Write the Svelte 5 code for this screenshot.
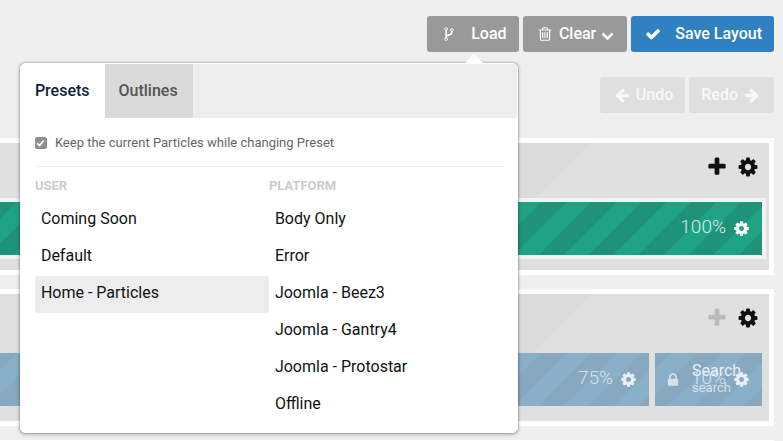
<script>
  let tab = $state('Presets');
  let keep = $state(true);
  let selected = $state('Home - Particles');

  const groups = [
    { title: 'User', items: ['Coming Soon', 'Default', 'Home - Particles'] },
    {
      title: 'Platform',
      items: ['Body Only', 'Error', 'Joomla - Beez3', 'Joomla - Gantry4', 'Joomla - Protostar', 'Offline']
    }
  ];

  const icons = {
    check: 'M1671 566q0 40-28 68l-724 724-136 136q-28 28-68 28t-68-28l-136-136-362-362q-28-28-28-68t28-68l136-136q28-28 68-28t68 28l294 295 656-657q28-28 68-28t68 28l136 136q28 28 28 68z',
    plus: 'M1600 736v192q0 40-28 68t-68 28h-416v416q0 40-28 68t-68 28h-192q-40 0-68-28t-28-68v-416h-416q-40 0-68-28t-28-68v-192q0-40 28-68t68-28h416v-416q0-40 28-68t68-28h192q40 0 68 28t28 68v416h416q40 0 68 28t28 68z',
    cog: 'M1152 896q0-106-75-181t-181-75-181 75-75 181 75 181 181 75 181-75 75-181zm512-109v222q0 12-8 23t-20 13l-185 28q-19 54-39 91 35 50 107 138 10 12 10 25t-9 23q-27 37-99 108t-94 71q-12 0-26-9l-138-108q-44 23-91 38-16 136-29 186-7 28-36 28h-222q-14 0-24.5-8.5t-11.5-21.5l-28-184q-49-16-90-37l-141 107q-10 9-25 9-14 0-25-11-126-114-165-168-7-10-7-23 0-12 8-23 15-21 51-66.5t54-70.5q-27-50-41-99l-183-27q-13-2-21-12.5t-8-23.5v-222q0-12 8-23t19-13l186-28q14-46 39-92-40-57-107-138-10-12-10-24 0-10 9-23 26-36 98.5-107.5t94.5-71.5q13 0 26 10l138 107q44-23 91-38 16-136 29-186 7-28 36-28h222q14 0 24.5 8.5t11.5 21.5l28 184q49 16 90 37l142-107q9-9 24-9 13 0 25 10 129 119 165 170 7 8 7 22 0 12-8 23-15 21-51 66.5t-54 70.5q26 50 41 98l183 28q13 2 21 12.5t8 23.5z',
    arrow: 'M1664 896v128q0 53-32.5 90.5t-84.5 37.5h-704l293 294q38 36 38 90t-38 90l-75 76q-37 37-90 37-52 0-91-37l-651-652q-37-37-37-90 0-52 37-91l651-650q38-38 91-38 52 0 90 38l75 74q38 38 38 91t-38 91l-293 293h704q52 0 84.5 37.5t32.5 90.5z',
    lock: 'M640 768h512v-192q0-106-75-181t-181-75-181 75-75 181v192zm832 96v576q0 40-28 68t-68 28h-960q-40 0-68-28t-28-68v-576q0-40 28-68t68-28h32v-192q0-184 132-316t316-132 316 132 132 316v192h32q40 0 68 28t28 68z',
    trash: 'M704 736v576q0 14-9 23t-23 9h-64q-14 0-23-9t-9-23v-576q0-14 9-23t23-9h64q14 0 23 9t9 23zm256 0v576q0 14-9 23t-23 9h-64q-14 0-23-9t-9-23v-576q0-14 9-23t23-9h64q14 0 23 9t9 23zm256 0v576q0 14-9 23t-23 9h-64q-14 0-23-9t-9-23v-576q0-14 9-23t23-9h64q14 0 23 9t9 23zm128 724v-948h-896v948q0 22 7 40.5t14.5 27 10.5 8.5h832q3 0 10.5-8.5t14.5-27 7-40.5zm-672-1076h448l-48-117q-7-9-17-11h-317q-10 2-17 11zm928 32v64q0 14-9 23t-23 9h-96v948q0 83-47 143.5t-113 60.5h-832q-66 0-113-58.5t-47-141.5v-952h-96q-14 0-23-9t-9-23v-64q0-14 9-23t23-9h309l70-167q15-37 54-63t79-26h320q40 0 79 26t54 63l70 167h309q14 0 23 9t9 23z',
    fork: 'M672 1472q0-40-28-68t-68-28-68 28-28 68 28 68 68 28 68-28 28-68zm0-1152q0-40-28-68t-68-28-68 28-28 68 28 68 68 28 68-28 28-68zm640 128q0-40-28-68t-68-28-68 28-28 68 28 68 68 28 68-28 28-68zm96 0q0 52-26 96.5t-70 69.5q-2 287-226 414-67 38-203 81-128 40-169.5 71t-41.5 100v26q44 25 70 69.5t26 96.5q0 80-56 136t-136 56-136-56-56-136q0-52 26-96.5t70-69.5v-820q-44-25-70-69.5t-26-96.5q0-80 56-136t136-56 136 56 56 136q0 52-26 96.5t-70 69.5v497q54-26 154-57 55-17 87.5-29.5t70.5-31 59-39.5 40.5-51 28-69.5 8.5-91.5q-44-25-70-69.5t-26-96.5q0-80 56-136t136-56 136 56 56 136z'
  };
</script>

{#snippet icon(name, size)}
  <svg class="icon {size}" viewBox="0 0 1792 1792" aria-hidden="true"><path d={icons[name]} /></svg>
{/snippet}

{#snippet sectionTools(locked)}
  <div class="section-tools">
    <button class="tool" aria-label="Add row" disabled={locked}>{@render icon('plus', 'large')}</button>
    <button class="tool" aria-label="Section settings">{@render icon('cog', 'large')}</button>
  </div>
{/snippet}

<main>
  <div class="toolbar">
    <div class="dropdown">
      <button class="btn">
        <span class="slot">{@render icon('fork', 'regular')}</span>
        Load
      </button>
      <div class="popover">
        <div class="tabs" role="tablist">
          {#each ['Presets', 'Outlines'] as name}
            <button class="tab" class:active={tab === name} role="tab" aria-selected={tab === name} onclick={() => (tab = name)}>{name}</button>
          {/each}
        </div>
        <div class="panel">
          <label class="keep">
            <input type="checkbox" bind:checked={keep} />
            Keep the current Particles while changing Preset
          </label>
          <div class="groups">
            {#each groups as group}
              <div class="group">
                <h2>{group.title}</h2>
                <ul>
                  {#each group.items as item}
                    <li>
                      <button class="item" class:selected={selected === item} onclick={() => (selected = item)}>{item}</button>
                    </li>
                  {/each}
                </ul>
              </div>
            {/each}
          </div>
        </div>
      </div>
    </div>
    <button class="btn tight">
      <span class="slot">{@render icon('trash', 'regular')}</span>
      Clear
      <svg class="chevron" viewBox="0 0 12 8" aria-hidden="true"><path d="M2 2l4 4 4-4" /></svg>
    </button>
    <button class="btn primary">
      <span class="slot">{@render icon('check', 'regular')}</span>
      Save Layout
    </button>
  </div>

  <div class="toolbar history">
    <button class="btn tight" disabled><span class="slot">{@render icon('arrow', 'regular')}</span>Undo</button>
    <button class="btn tight" disabled>Redo<span class="slot flip">{@render icon('arrow', 'regular')}</span></button>
  </div>

  <section>
    {@render sectionTools(false)}
    <div class="grid framed">
      <div class="block green">
        <span class="size">100%</span>
        <button class="tool" aria-label="Block settings">{@render icon('cog', 'medium')}</button>
      </div>
    </div>
  </section>

  <section>
    {@render sectionTools(true)}
    <div class="grid">
      <div class="block blue">
        <span class="size">75%</span>
        <button class="tool" aria-label="Block settings">{@render icon('cog', 'medium')}</button>
      </div>
      <div class="block blue narrow">
        <span class="locked">{@render icon('lock', 'regular')}</span>
        <div class="particle">
          <span class="title">Search</span>
          <span class="kind">search</span>
        </div>
        <span class="size">10%</span>
        <button class="tool" aria-label="Block settings">{@render icon('cog', 'medium')}</button>
      </div>
    </div>
  </section>

  <section>
    {@render sectionTools(false)}
  </section>
</main>

<style>
  :global(body) {
    margin: 0;
    background: #efefef;
  }
  main {
    box-sizing: border-box;
    height: 100vh;
    overflow: hidden;
    padding: 16px 9px 0 0;
    font-family: Roboto, 'Liberation Sans', sans-serif;
    font-size: 16px;
    line-height: 20px;
  }
  button {
    border: 0;
    padding: 0;
    background: none;
    font: inherit;
    color: inherit;
    cursor: pointer;
  }
  .icon {
    display: block;
    fill: currentColor;
  }
  .regular {
    width: 16px;
    height: 16px;
  }
  .medium {
    width: 17px;
    height: 17px;
  }
  .large {
    width: 22px;
    height: 22px;
  }
  .toolbar {
    display: flex;
    justify-content: flex-end;
    gap: 4px;
  }
  .history {
    margin: 25px 0;
  }
  .btn {
    display: flex;
    align-items: center;
    justify-content: center;
    gap: 12px;
    height: 36px;
    padding: 0 12px;
    border-radius: 3px;
    background: #999;
    color: #fff;
    font-weight: 500;
  }
  .btn.tight {
    gap: 4px;
  }
  .btn.primary {
    background: #3180c2;
  }
  .btn:disabled {
    background: #dfdfdf;
    color: #f8f8f8;
    cursor: default;
  }
  .slot {
    display: flex;
    justify-content: center;
    width: 20px;
  }
  .flip {
    transform: scaleX(-1);
  }
  .chevron {
    width: 15px;
    height: 10px;
    margin-top: 4px;
    fill: none;
    stroke: #fff;
    stroke-width: 2;
  }
  .dropdown {
    position: relative;
  }
  .dropdown .btn:first-child {
    min-width: 92px;
  }
  .popover {
    position: absolute;
    z-index: 2;
    top: 47px;
    right: 1px;
    width: 496px;
    border: 1px solid #fff;
    border-radius: 5px;
    background: #fff;
    box-shadow: 0 0 2px rgba(0, 0, 0, 0.4), 0 1px 4px rgba(0, 0, 0, 0.3);
  }
  .popover::before {
    content: '';
    position: absolute;
    right: 33px;
    bottom: 100%;
    border: 10px solid transparent;
    border-top-width: 0;
    border-bottom-color: #fff;
  }
  .tabs {
    display: flex;
    border-radius: 4px 4px 0 0;
    background: #ededed;
    overflow: hidden;
  }
  .tab {
    height: 54px;
    padding: 0 15px 0 14px;
    background: #dadada;
    color: #555;
    font-weight: 500;
  }
  .tab.active {
    background: #fff;
    color: #0f2039;
  }
  .panel {
    padding: 15px 14px 8px;
  }
  .keep {
    display: flex;
    align-items: center;
    gap: 8px;
    padding-bottom: 13px;
    border-bottom: 1px solid #ededed;
    color: #666;
    font-size: 13px;
  }
  .keep input {
    display: grid;
    place-items: center;
    appearance: none;
    box-sizing: border-box;
    width: 12px;
    height: 12px;
    margin: 0;
    border: 1px solid #8e8e93;
    border-radius: 2px;
  }
  .keep input:checked {
    background: #8e8e93;
  }
  .keep input:checked::after {
    content: '';
    width: 3px;
    height: 7px;
    margin-bottom: 2px;
    border: solid #fff;
    border-width: 0 2px 2px 0;
    box-sizing: content-box;
    transform: rotate(40deg) scale(0.8);
  }
  .groups {
    display: flex;
    padding-top: 9px;
  }
  .group {
    flex: 1;
  }
  h2 {
    margin: 0 0 6px;
    color: #ccc;
    font-size: 13px;
    font-weight: 700;
    text-transform: uppercase;
  }
  ul {
    margin: 0;
    padding: 0;
    list-style: none;
  }
  .item {
    display: block;
    width: 100%;
    height: 37px;
    padding: 0 6px 3px;
    border-radius: 3px;
    color: #111;
    text-align: left;
  }
  .item.selected {
    background: #ededed;
  }
  section {
    margin-bottom: 14px;
    padding: 0 3px 11px 0;
    border: 5px solid #fff;
    border-left: 0;
    background: linear-gradient(135deg, #dbdbdb 50%, transparent 50%) right 177px top 0 / 354px 354px #e0e0e0 no-repeat;
  }
  .section-tools {
    display: flex;
    align-items: center;
    justify-content: flex-end;
    gap: 9px;
    height: 48px;
    padding: 0 7px 7px 0;
    color: #111;
  }
  .tool:disabled {
    color: #bbb;
  }
  .grid {
    display: flex;
    gap: 6px;
    padding: 4px 4px 4px 0;
  }
  .grid.framed {
    background: #f3f3f3;
  }
  .block {
    position: relative;
    display: flex;
    flex: 1;
    align-items: center;
    justify-content: flex-end;
    gap: 7px;
    box-sizing: border-box;
    height: 53px;
    padding: 0 12px;
    background-position: 42px 0;
    background-size: 50px 50px;
  }
  .green {
    background-image: linear-gradient(135deg, #1f9379 25%, #20a385 25% 50%, #1f9379 50% 75%, #20a385 75%);
    color: #fff;
  }
  .blue {
    background-image: linear-gradient(135deg, #87a8bf 25%, #8aafc8 25% 50%, #87a8bf 50% 75%, #8aafc8 75%);
    color: #e9eff4;
  }
  .narrow {
    flex: 0 0 107px;
  }
  .size {
    padding-bottom: 3px;
    font-size: 19px;
    font-weight: 300;
    opacity: 0.8;
  }
  .locked {
    margin-right: auto;
    margin-left: -2px;
    opacity: 0.8;
  }
  .particle {
    position: absolute;
    top: 8px;
    left: 37px;
    display: flex;
    flex-direction: column;
  }
  .kind {
    font-size: 13px;
    line-height: 14px;
    opacity: 0.8;
  }
</style>
